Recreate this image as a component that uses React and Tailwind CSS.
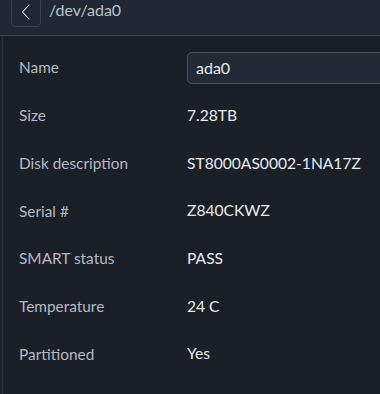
export default function App() {
  const rows = [
    ["Size", "7.28TB"],
    ["Disk description", "ST8000AS0002-1NA17Z"],
    ["Serial #", "Z840CKWZ"],
    ["SMART status", "PASS"],
    ["Temperature", "24 C"],
    ["Partitioned", "Yes"],
  ];
  return (
    <div className="w-[380px] h-[394px] overflow-hidden bg-[#1b1f27] flex flex-col" style={{ fontFamily: "Lato, 'Noto Sans', sans-serif" }}>
      <div className="h-[36px] shrink-0 bg-[#222833] border-b border-[#3a414c] flex items-end pb-[8px] pl-[11px] gap-[8px]">
        <div className="w-[30px] h-[31px] border border-[#3a414c] rounded-[5px] flex items-center justify-center pt-[1px]">
          <svg width="10" height="16" viewBox="0 0 10 16" fill="none">
            <path d="M8 1 L1.5 8 L8 15" stroke="#eceef2" strokeWidth="1.1" strokeLinecap="round" strokeLinejoin="round" />
          </svg>
        </div>
        <div className="text-[16px] text-[#b9c0cb] leading-[20px] mb-[7px]">/dev/ada0</div>
      </div>
      <div className="flex-1 ml-[2px] border-l border-[#2c323c] pl-[16px] pt-[16px]">
        <div className="flex items-center h-[32px]">
          <div className="w-[168px] text-[15.4px] text-[#b4bac4]">Name</div>
          <div className="flex-1 h-[32px] -mr-[10px] bg-[#232a35] border border-[#4a515c] rounded-[5px] flex items-center pl-[8px] text-[16px] text-[#e6e9ee]">ada0</div>
        </div>
        {rows.map(([k, v]) => (
          <div key={k} className="flex items-center h-[32px] mt-[15.7px]">
            <div className="w-[168px] text-[15.4px] text-[#b4bac4]">{k}</div>
            <div className="text-[15.6px] text-[#e8ebef]">{v}</div>
          </div>
        ))}
      </div>
    </div>
  );
}
